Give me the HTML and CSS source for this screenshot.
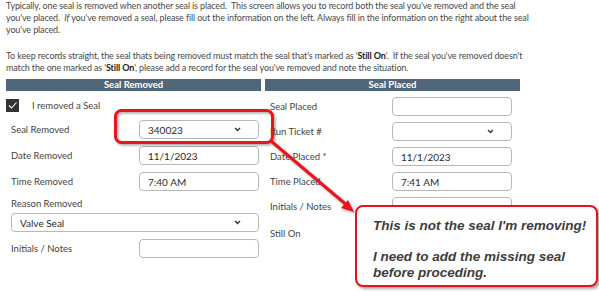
FILE: index.html
```html
<!DOCTYPE html>
<html lang="en">
<head>
  <meta charset="UTF-8" />
  <title>Seal Change</title>
  <link rel="stylesheet" href="styles.css">
</head>
<body>
  <div class="page">
    <div class="intro">
      <p>Typically, one seal is removed when another seal is placed.&nbsp; This screen allows you to record both the seal you've removed and the seal<br>you've placed.&nbsp; <i>If</i> you've removed a seal, please fill out the information on the left. Always fill in the information on the right about the seal<br>you've placed.</p>
      <p>To keep records straight, the seal thats being removed must match the seal that's marked as '<b>Still On</b>'.&nbsp; If the seal you've removed doesn't<br>match the one marked as '<b>Still On</b>', please add a record for the seal you've removed and note the situation.</p>
    </div>

    <div class="panels">
      <div class="panel">
        <div class="panel-head">Seal Removed</div>
        <div class="panel-body left">
          <div class="row check-row">
            <span class="checkbox">
              <svg width="13" height="13" viewBox="0 0 13 13"><polyline points="3,6.5 5.5,9 10.5,3.5" fill="none" stroke="#fff" stroke-width="1.1"/></svg>
            </span>
            <span class="check-label">I removed a Seal</span>
          </div>
          <div class="row">
            <label>Seal Removed</label>
            <div class="select">340023
              <svg width="7" height="5" viewBox="0 0 7 5"><polyline points="1,1 3.5,3.5 6,1" fill="none" stroke="#333" stroke-width="1.4"/></svg>
            </div>
          </div>
          <div class="row">
            <label>Date Removed</label>
            <input type="text" value="11/1/2023">
          </div>
          <div class="row">
            <label>Time Removed</label>
            <input type="text" value="7:40 AM">
          </div>
          <div class="stack-label">Reason Removed</div>
          <div class="select wide">Valve Seal
            <svg width="7" height="5" viewBox="0 0 7 5"><polyline points="1,1 3.5,3.5 6,1" fill="none" stroke="#333" stroke-width="1.4"/></svg>
          </div>
          <div class="row">
            <label>Initials / Notes</label>
            <input type="text" value="">
          </div>
        </div>
      </div>

      <div class="panel">
        <div class="panel-head">Seal Placed</div>
        <div class="panel-body right">
          <div class="row">
            <label>Seal Placed</label>
            <input type="text" value="">
          </div>
          <div class="row">
            <label>Run Ticket #</label>
            <div class="select">
              <svg width="7" height="5" viewBox="0 0 7 5"><polyline points="1,1 3.5,3.5 6,1" fill="none" stroke="#333" stroke-width="1.4"/></svg>
            </div>
          </div>
          <div class="row">
            <label>Date Placed *</label>
            <input type="text" value="11/1/2023">
          </div>
          <div class="row">
            <label>Time Placed</label>
            <input type="text" value="7:41 AM">
          </div>
          <div class="row">
            <label>Initials / Notes</label>
            <input type="text" value="">
          </div>
          <div class="row still-row">
            <label>Still On</label>
          </div>
        </div>
      </div>
    </div>
  </div>

  <!-- annotation overlay -->
  <svg class="markup" width="599" height="292" viewBox="0 0 599 292">
    <defs>
      <filter id="shade" x="-10%" y="-10%" width="130%" height="130%">
        <feDropShadow dx="1.5" dy="1.5" stdDeviation="1" flood-color="#000" flood-opacity="0.35"/>
      </filter>
    </defs>
    <g filter="url(#shade)" stroke="#e5131d" fill="none">
      <rect x="115.5" y="110.5" width="157" height="32" rx="6" stroke-width="3"/>
      <line x1="271" y1="141" x2="349" y2="207" stroke-width="3"/>
      <polygon points="354,212 341,208 348,200" fill="#e5131d" stroke="none"/>
    </g>
  </svg>

  <div class="callout">
    <p>This is not the seal I'm removing!</p>
    <p>I need to add the missing seal before proceding.</p>
  </div>
</body>
</html>
```

FILE: styles.css
```css
* {
  box-sizing: border-box;
}
body {
  margin: 0;
  font-family: Lato, 'Noto Sans', sans-serif;
  color: #444;
  background: #fff;
}
.page {
  width: 521px;
  padding-left: 6px;
}
.intro p {
  margin: 0;
  white-space: nowrap;
  font-size: 9px;
  letter-spacing: -0.13px;
  line-height: 12px;
  color: #4a4a4a;
}
.intro p + p {
  margin-top: 14px;
}
.intro b {
  color: #222;
}
.panels {
  display: flex;
  gap: 4px;
  margin-top: 5px;
}
.panel {
  width: 255px;
}
.panel-head {
  height: 12px;
  line-height: 12px;
  background: #526679;
  color: #fff;
  font-weight: bold;
  font-size: 9.5px;
  text-align: center;
}
.panel-body {
  padding-top: 6px;
  font-size: 9.5px;
}
.panel-body.left {
  padding-left: 5px;
  padding-right: 2px;
}
.panel-body.right {
  padding-left: 5px;
  padding-right: 8px;
}
.row {
  display: flex;
  align-items: center;
  justify-content: space-between;
  height: 19px;
  margin-bottom: 7px;
}
.right .row {
  margin-bottom: 6px;
}
.check-row {
  justify-content: flex-start;
  height: 17px;
  margin-bottom: 6px;
  margin-left: -5px;
}
.checkbox {
  width: 13px;
  height: 13px;
  background: #333;
  display: flex;
}
.check-label {
  margin-left: 13px;
}
label {
  color: #444;
}
input, .select {
  width: 120px;
  height: 19px;
  border: 1px solid #b8b8b8;
  border-radius: 4px;
  padding: 0 8px;
  font-family: Lato, 'Noto Sans', sans-serif;
  font-size: 10px;
  color: #2a2a2a;
  background: #fff;
}
.select {
  display: flex;
  align-items: center;
  justify-content: space-between;
  padding-right: 17px;
}
.select svg {
  margin-left: auto;
}
.stack-label {
  height: 12px;
  line-height: 12px;
  margin-bottom: 3px;
}
.select.wide {
  width: 248px;
  margin-bottom: 7px;
}
.still-row {
  margin-top: 8px;
}
.markup {
  position: absolute;
  left: 0;
  top: 0;
  pointer-events: none;
}
.callout {
  position: absolute;
  left: 355px;
  top: 205px;
  width: 243px;
  height: 82px;
  border: 2px solid #e5131d;
  border-radius: 8px;
  background: #fff;
  box-shadow: 2px 2px 3px rgba(0, 0, 0, 0.35);
  padding: 11px 0 0 16px;
  font-family: 'Liberation Sans', Arial, sans-serif;
  font-weight: bold;
  font-style: italic;
  font-size: 13.5px;
  line-height: 15.5px;
  color: #3d3d3d;
}
.callout p {
  margin: 0 0 15.5px;
}
```
